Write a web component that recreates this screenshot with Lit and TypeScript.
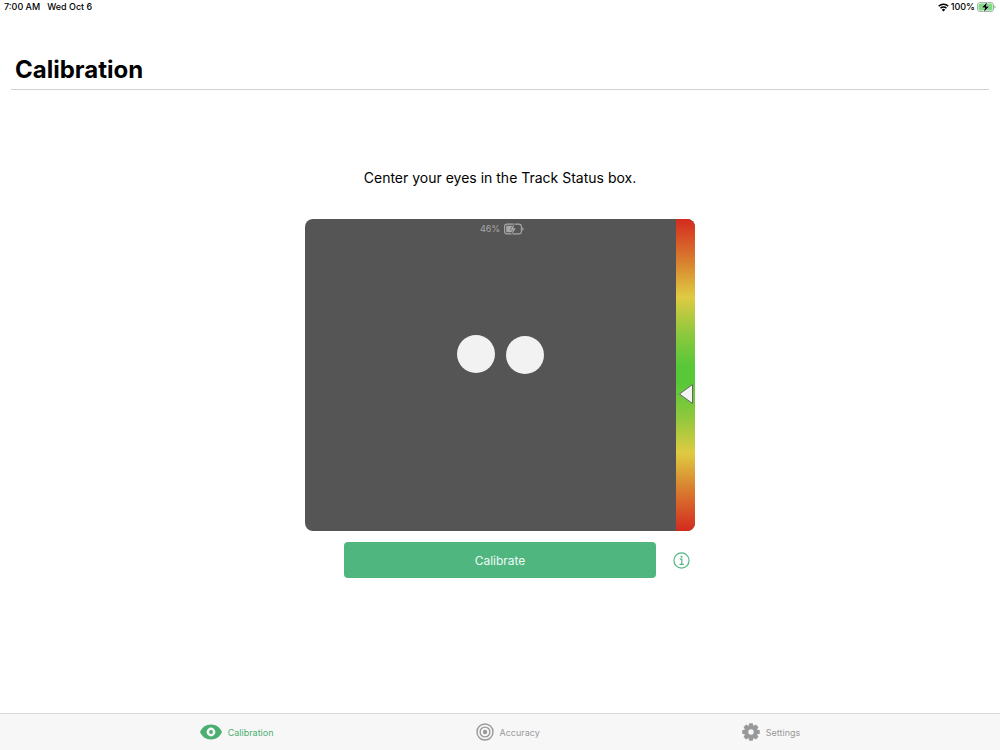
import { LitElement, html, css, svg } from "lit";
import { customElement, state } from "lit/decorators.js";

type Tab = "calibration" | "accuracy" | "settings";

const gearTeeth = [0, 45, 90, 135, 180, 225, 270, 315];

const tabIcons = {
  calibration: html`<svg width="22" height="16" viewBox="0 0 22 16" aria-hidden="true">
    <path fill="currentColor" fill-rule="evenodd" d="M11 .5C5.800 .5 1.800 3.600 0 8c1.800 4.400 5.800 7.500 11 7.500S20.200 12.400 22 8C20.200 3.600 16.200.5 11 .5Zm0 3.100a4.400 4.400 0 1 1 0 8.800 4.400 4.400 0 0 1 0-8.800Z"/>
    <circle cx="11" cy="8" r="1.900" fill="currentColor"/>
  </svg>`,
  accuracy: html`<svg width="18" height="18" viewBox="0 0 18 18" fill="none" stroke="currentColor" aria-hidden="true">
    <circle cx="9" cy="9" r="8" stroke-width="1.400"/>
    <circle cx="9" cy="9" r="4.900" stroke-width="1.400"/>
    <circle cx="9" cy="9" r="2.200" fill="currentColor" stroke="none"/>
  </svg>`,
  settings: html`<svg width="18" height="18" viewBox="0 0 18 18" aria-hidden="true">
    ${gearTeeth.map(
      (angle) => svg`<path fill="currentColor" transform="rotate(${angle} 9 9)" d="M6.400 4.500 7 .9Q7.100.2 7.800 .2h2.400q.7 0 .8.7L11.600 4.500Z"/>`
    )}
    <circle cx="9" cy="9" r="4.700" fill="none" stroke="currentColor" stroke-width="4"/>
  </svg>`,
};

@customElement("track-status")
export class TrackStatus extends LitElement {
  static properties = {
    battery: { type: Number },
    eyes: { attribute: false },
    distance: { type: Number },
  };
  declare battery: number;
  declare eyes: { x: number; y: number }[];
  declare distance: number;

  constructor() {
    super();
    this.battery = 46;
    this.eyes = [
      { x: 46.2, y: 43.2 },
      { x: 59.4, y: 43.6 },
    ];
    this.distance = 56;
  }

  static styles = css`
    :host {
      display: flex;
      position: relative;
      aspect-ratio: 5 / 4;
      border-radius: 8px;
      overflow: hidden;
      background: #555555;
    }
    .view { position: relative; flex: 1; }
    .eye {
      position: absolute;
      width: 38px;
      height: 38px;
      border-radius: 50%;
      background: #f2f2f2;
      transform: translate(-50%, -50%);
    }
    .range {
      position: relative;
      width: 19px;
      background: linear-gradient(#d42a1f, #d9822f 14%, #dfcb42 25%, #8cc83d 37%, #59c838 47%, #59c838 53%, #8cc83d 63%, #dfcb42 75%, #d9822f 86%, #d42a1f);
    }
    .marker {
      position: absolute;
      left: 2px;
      transform: translateY(-50%);
    }
    .battery {
      position: absolute;
      inset: 4px 0 auto;
      display: flex;
      align-items: center;
      justify-content: center;
      gap: 4px;
      padding-left: 4px;
      color: #a8a8a8;
      font-size: 9px;
      line-height: 12px;
    }
    svg { display: block; }
  `;

  render() {
    return html`
      <div class="view">
        ${this.eyes.map((eye) => html`<div class="eye" style="left:${eye.x}%;top:${eye.y}%"></div>`)}
      </div>
      <div class="range">
        <svg class="marker" style="top:${this.distance}%" width="16" height="22" viewBox="0 0 16 22" aria-hidden="true">
          <path d="M14.500 1.500v19L1.500 11Z" fill="#f4f4f4" stroke="#666" stroke-width="1"/>
        </svg>
      </div>
      <div class="battery">
        <span>${this.battery}%</span>
        <svg width="20" height="12" viewBox="0 0 20 12" aria-hidden="true">
          <rect x=".6" y="1.100" width="16.800" height="9.800" rx="2.500" fill="none" stroke="currentColor" stroke-width="1.100"/>
          <path d="M18.300 4.300q1.400.4 1.400 1.700t-1.400 1.700Z" fill="currentColor"/>
          <rect x="2.200" y="2.700" width="6" height="6.600" rx="1" fill="currentColor"/>
          <path d="M10 .6 6.600 6.700h2.100L7.900 11.400l3.800-6.100H9.400Z" fill="currentColor" stroke="#555" stroke-width="1" paint-order="stroke"/>
        </svg>
      </div>
    `;
  }
}

@customElement("app-root")
export class AppRoot extends LitElement {
  @state() tab: Tab = "calibration";

  static styles = css`
    :host {
      display: flex;
      flex-direction: column;
      min-height: 100vh;
      background: #fff;
      color: #000;
      font-family: Inter, "Liberation Sans", sans-serif;
    }
    svg { display: block; }
    button {
      border: 0;
      padding: 0;
      background: none;
      font: inherit;
      cursor: pointer;
    }
    .status {
      display: flex;
      justify-content: space-between;
      padding: 0 4px;
      font-size: 9px;
      font-weight: 500;
      line-height: 14px;
    }
    .status div { display: flex; align-items: center; }
    .clock { gap: 7px; }
    .power { gap: 2px; }
    header {
      margin: 38px 11px 0;
      padding: 0 4px 1px;
      border-bottom: 1px solid #d2d2d2;
    }
    h1 {
      margin: 0;
      font-size: 24px;
      font-weight: 700;
      line-height: 36px;
    }
    main {
      flex: 1;
      display: flex;
      flex-direction: column;
      align-items: center;
      padding-top: 76px;
    }
    .hint {
      margin: 0 0 29px;
      font-size: 14px;
      line-height: 24px;
    }
    .panel { width: min(390px, 90%); }
    .actions {
      display: grid;
      grid-template-columns: 1fr 8fr 1fr;
      align-items: center;
      margin-top: 11px;
    }
    .calibrate {
      grid-column: 2;
      height: 36px;
      border-radius: 4px;
      background: #50b680;
      color: #effaf4;
      font-size: 12px;
    }
    .info {
      justify-self: end;
      margin-right: 5px;
      color: #50b680;
    }
    nav {
      display: flex;
      justify-content: center;
      gap: 202px;
      border-top: 1px solid #d9d9d9;
      background: #f7f7f7;
    }
    .tab {
      display: flex;
      align-items: center;
      gap: 6px;
      height: 36px;
      color: #999999;
      font-size: 9px;
    }
    .tab[aria-current="page"] { color: #4bae71; }
  `;

  private renderTab(id: Tab, label: string) {
    return html`<button class="tab" aria-current=${this.tab === id ? "page" : "false"} @click=${() => (this.tab = id)}>
      ${tabIcons[id]}<span>${label}</span>
    </button>`;
  }

  render() {
    return html`
      <div class="status">
        <div class="clock"><span>7:00 AM</span><span>Wed Oct 6</span></div>
        <div class="power">
          <svg width="11" height="9" viewBox="0 0 11 9" fill="none" stroke="#000" stroke-width="1.400" aria-hidden="true">
            <path d="M.7 3.300a6.800 6.800 0 0 1 9.600 0M2.500 5.300a4.200 4.200 0 0 1 6 0"/>
            <path d="M3.800 6.700a2.400 2.400 0 0 1 3.400 0L5.500 8.500Z" fill="#000" stroke="none"/>
          </svg>
          <span>100%</span>
          <svg width="19" height="10" viewBox="0 0 19 10" aria-hidden="true">
            <rect x=".5" y=".5" width="16" height="9" rx="2.500" fill="#fff" stroke="#a5b5a5"/>
            <rect x="1.500" y="1.500" width="14" height="7" rx="1.500" fill="#7bdc83"/>
            <path d="M17.300 3.500q1.300.3 1.300 1.500t-1.300 1.500Z" fill="#a5b5a5"/>
            <path d="M10 .3 5 5.600h3L7 9.700l5-5.300H9Z" fill="#000" stroke="#fff" stroke-width=".8" paint-order="stroke"/>
          </svg>
        </div>
      </div>
      <header><h1>Calibration</h1></header>
      <main>
        <p class="hint">Center your eyes in the Track Status box.</p>
        <div class="panel">
          <track-status></track-status>
          <div class="actions">
            <button class="calibrate">Calibrate</button>
            <button class="info" aria-label="Information">
              <svg width="17" height="17" viewBox="0 0 17 17" fill="none" stroke="currentColor" stroke-width="1.200" aria-hidden="true">
                <circle cx="8.500" cy="8.500" r="7.600"/>
                <path d="M6.800 7.200h2v5M6.500 12.300h4.300"/>
                <circle cx="8.500" cy="4.700" r="1" fill="currentColor" stroke="none"/>
              </svg>
            </button>
          </div>
        </div>
      </main>
      <nav aria-label="Sections">
        ${this.renderTab("calibration", "Calibration")}
        ${this.renderTab("accuracy", "Accuracy")}
        ${this.renderTab("settings", "Settings")}
      </nav>
    `;
  }
}
